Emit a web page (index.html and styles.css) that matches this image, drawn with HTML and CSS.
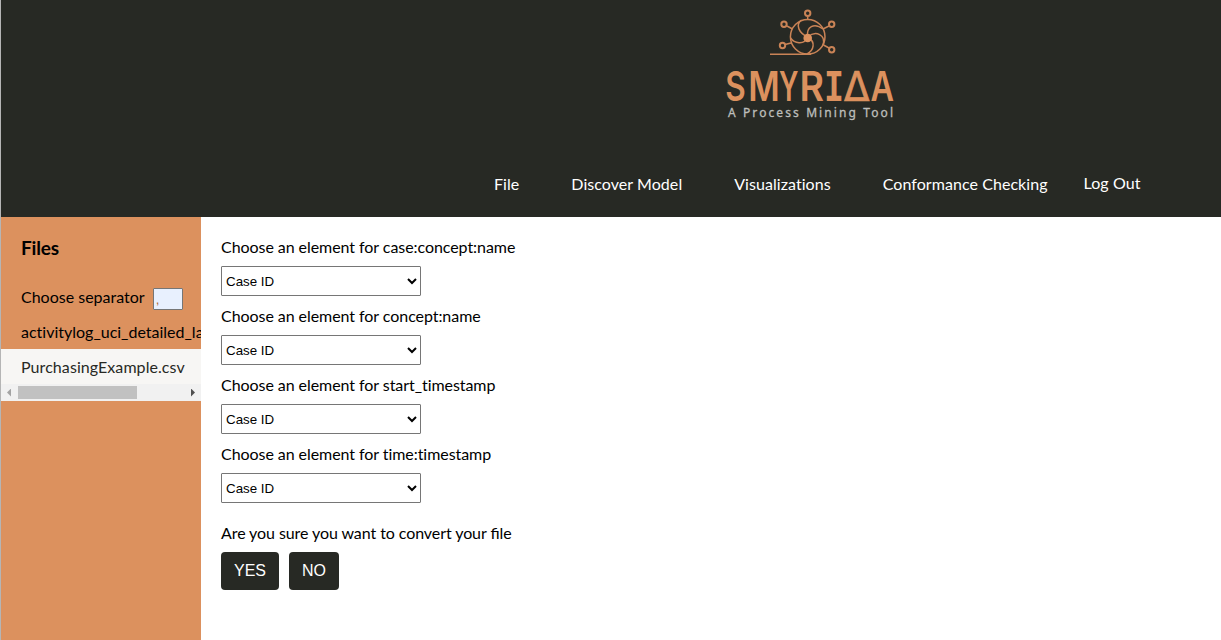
FILE: index.html
```
<!DOCTYPE html>
<html lang="en">
<head>
<meta charset="utf-8">
<title>SMYRIDA</title>
<link rel="stylesheet" href="styles.css">
</head>
<body>
<header class="header">
  <svg class="logo" width="190" height="130" viewBox="0 0 190 130" role="img" aria-label="Logo">
    <g class="wheel">
      <circle cx="92.7" cy="36.8" r="17.3"/>
      <path d="M55 54.3H96"/>
      <path d="M92.7 37C84 33 80 25 86.5 20"/>
      <path d="M92.7 37C91 27 99 22 108 29"/>
      <path d="M92.7 37C101 30 111 35 108 45"/>
      <path d="M92.7 37C101 42 99 50 92 54"/>
      <path d="M92.7 37C89 46 79 43 75.5 38"/>
      <path d="M92.7 16V20M72 26L77.5 29M70 44.5L76 43M114 26L108 29M114 48L108.5 45"/>
      <g class="knobs">
        <circle cx="92.7" cy="13.2" r="2.7"/>
        <circle cx="69" cy="24.3" r="2.7"/>
        <circle cx="67.5" cy="45.5" r="2.7"/>
        <circle cx="116.7" cy="24.3" r="2.7"/>
        <circle cx="116.7" cy="49.7" r="2.7"/>
      </g>
    </g>
    <circle class="hub" cx="92.7" cy="38" r="4.3"/>
    <g class="brand">
      <text x="10.3" y="101" textLength="20.5" lengthAdjust="spacingAndGlyphs">S</text>
      <text x="33.2" y="101" textLength="31.5" lengthAdjust="spacingAndGlyphs">M</text>
      <text x="64" y="101" textLength="19.5" lengthAdjust="spacingAndGlyphs">Y</text>
      <text x="84.5" y="101" textLength="24.5" lengthAdjust="spacingAndGlyphs">R</text>
      <text class="slab" x="109" y="101" textLength="20" lengthAdjust="spacingAndGlyphs">I</text>
      <text class="delta" x="129" y="101" textLength="25.5" lengthAdjust="spacingAndGlyphs">Δ</text>
      <text x="155.5" y="101" textLength="23.5" lengthAdjust="spacingAndGlyphs">A</text>
    </g>
    <text class="tagline" x="13" y="117" textLength="165">A Process Mining Tool</text>
  </svg>
  <nav class="nav">
    <a>File</a>
    <a>Discover Model</a>
    <a>Visualizations</a>
    <a>Conformance Checking</a>
    <a class="logout">Log Out</a>
  </nav>
</header>
<div class="page">
  <aside class="sidebar">
    <h2 class="title">Files</h2>
    <div class="separator"><label for="sep">Choose separator</label><input id="sep" class="sep" value=","></div>
    <div class="files">
      <div class="file">activitylog_uci_detailed_labour.xes</div>
      <div class="file selected">PurchasingExample.csv</div>
      <div class="scroll"><i class="arrow left"></i><i class="thumb"></i><i class="arrow right"></i></div>
    </div>
  </aside>
  <main class="content">
    <label class="label">Choose an element for case:concept:name</label>
    <select class="select"><option>Case ID</option></select>
    <label class="label">Choose an element for concept:name</label>
    <select class="select"><option>Case ID</option></select>
    <label class="label">Choose an element for start_timestamp</label>
    <select class="select"><option>Case ID</option></select>
    <label class="label">Choose an element for time:timestamp</label>
    <select class="select"><option>Case ID</option></select>
    <p class="question">Are you sure you want to convert your <span class="ligature">file</span></p>
    <div class="actions"><button class="button yes">YES</button><button class="button no">NO</button></div>
  </main>
</div>
</body>
</html>
```

FILE: styles.css
```
* { box-sizing: border-box; }
body {
  margin: 0;
  height: 640px;
  overflow: hidden;
  display: flex;
  flex-direction: column;
  border-left: 1px solid #b5b5b5;
  background: #fff;
  color: #000;
  font: 16px/24px Lato, sans-serif;
  font-variant-ligatures: none;
}
.header {
  flex: none;
  height: 217px;
  background: #272924;
}
.logo { display: block; margin-left: 714px; }
.wheel { fill: none; stroke: #c98356; stroke-width: 1.5; }
.knobs { stroke-width: 2; }
.hub { fill: #dc915e; }
.brand { fill: #dc915e; font: 600 41.5px Inter, sans-serif; }
.slab { font: 700 41.5px "DejaVu Sans Mono", monospace; }
.delta { font: 41.5px "DejaVu Sans", sans-serif; stroke: #dc915e; stroke-width: 0.7; }
.tagline { fill: #bdbebb; stroke: #bdbebb; stroke-width: 0.3; font: 12px "Noto Sans", sans-serif; }
.nav {
  display: flex;
  gap: 52px;
  padding: 42px 0 0 493px;
  color: #fff;
  white-space: nowrap;
  letter-spacing: 0.06px;
}
.logout { margin: -1px 0 0 -16px; }
.page { flex: 1; display: flex; }
.sidebar { width: 200px; flex: none; background: #dc915e; }
.title { margin: 19px 20px 0; font-size: 19px; line-height: 24px; font-weight: 700; letter-spacing: -0.2px; }
.separator { display: flex; align-items: flex-start; height: 24px; margin: 25px 0 5px 20px; }
.sep {
  width: 30px;
  height: 22px;
  margin: 3px 0 0 8px;
  padding: 1px 2px;
  border: 1px solid #767676;
  border-radius: 1px;
  background: #e8f0fe;
  color: #b06a3c;
  font: 13.333px "Liberation Sans", Arial, sans-serif;
}
.files { overflow: hidden; }
.file { height: 35px; padding: 6px 0 0 20px; white-space: nowrap; }
.selected { background: #f7f6f4; color: #272924; letter-spacing: 0.07px; }
.scroll { display: flex; align-items: center; height: 17px; padding: 0 6px; background: #f1f1f1; }
.arrow { width: 4px; height: 8px; background: #a3a3a3; clip-path: polygon(0 50%, 100% 0, 100% 100%); }
.right { margin-left: auto; background: #505050; clip-path: polygon(0 0, 100% 50%, 0 100%); }
.thumb { width: 119px; height: 13px; margin-left: 7px; background: #c1c1c1; }
.content { padding: 18px 20px 0; }
.label { display: block; height: 31px; letter-spacing: -0.06px; }
.select {
  display: block;
  width: 200px;
  height: 30px;
  margin-bottom: 8px;
  border: 1px solid #767676;
  border-radius: 1px;
  background: #fff;
  color: #000;
  font: 13.333px "Liberation Sans", Arial, sans-serif;
}
.question { margin: 18px 0 7px; letter-spacing: -0.08px; }
.ligature { letter-spacing: normal; font-variant-ligatures: normal; }
.actions { display: flex; gap: 10px; }
.button {
  height: 38px;
  padding: 0;
  border: 0;
  border-radius: 4px;
  background: #272924;
  color: #fff;
  font: 16px "Liberation Sans", Arial, sans-serif;
}
.yes { width: 58px; }
.no { width: 50px; }
```
